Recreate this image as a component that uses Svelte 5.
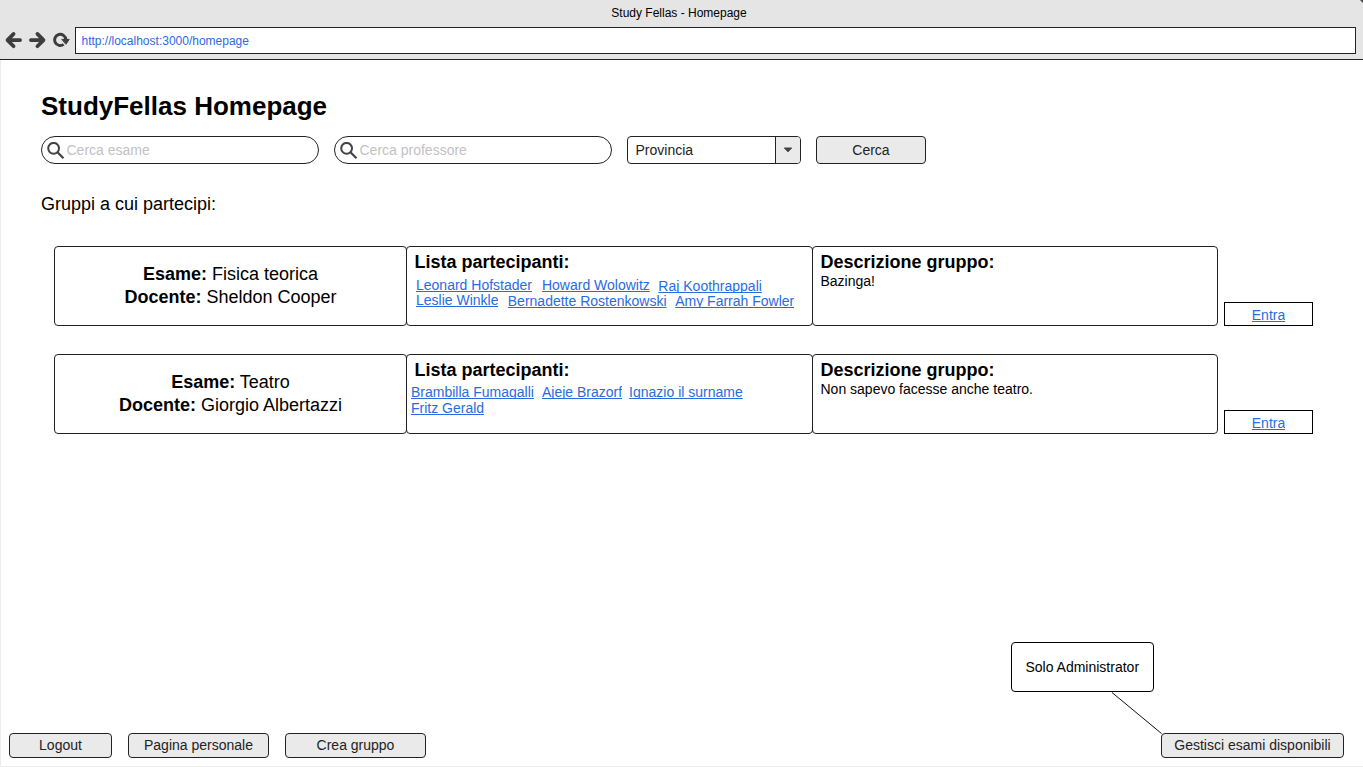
<script>
  const groups = [
    {
      exam: 'Fisica teorica',
      teacher: 'Sheldon Cooper',
      description: 'Bazinga!',
      inset: 9,
      top: 5,
      rows: [
        [
          { name: 'Leonard Hofstader', gap: 0, drop: 0 },
          { name: 'Howard Wolowitz', gap: 10, drop: 0 },
          { name: 'Raj Koothrappali', gap: 8.5, drop: 1 }
        ],
        [
          { name: 'Leslie Winkle', gap: 0, drop: 0 },
          { name: 'Bernadette Rostenkowski', gap: 9.3, drop: 1 },
          { name: 'Amy Farrah Fowler', gap: 8.7, drop: 1 }
        ]
      ],
      pitch: 15
    },
    {
      exam: 'Teatro',
      teacher: 'Giorgio Albertazzi',
      description: 'Non sapevo facesse anche teatro.',
      inset: 4,
      top: 4,
      rows: [
        [
          { name: 'Brambilla Fumagalli', gap: 0, drop: 0 },
          { name: 'Ajeje Brazorf', gap: 8, drop: 0 },
          { name: 'Ignazio il surname', gap: 7, drop: 0 }
        ],
        [{ name: 'Fritz Gerald', gap: 0, drop: 0 }]
      ],
      pitch: 16
    }
  ];
  const fields = ['Cerca esame', 'Cerca professore'];
</script>

<div class="window">
  <header>
    <div class="title">Study Fellas - Homepage</div>
    <div class="bar">
      <svg class="nav" width="72" height="22" viewBox="0 0 72 22" fill="none" stroke="#3d3d3d" stroke-width="3.7" stroke-linecap="round" stroke-linejoin="round">
        <path d="M13.6 4.9 7.5 11.1l6.1 6.2M8 11.1h12.1M37.4 4.9l6.1 6.2-6.1 6.2M43 11.1H30.9" />
        <path d="M63.6 15.4A5.6 5.6 0 1 1 65.8 10.6" stroke-width="3" stroke-linecap="butt" />
        <path d="M62.2 10.4h7l-3.1 4.6z" fill="#3d3d3d" stroke-width="1" />
      </svg>
      <div class="url">http://localhost:3000/homepage</div>
    </div>
    <svg class="corner" width="3" height="3" viewBox="0 0 3 3"><path d="M0 0h3v3z" fill="#444" /></svg>
  </header>

  <main>
    <h1>StudyFellas Homepage</h1>
    <div class="search">
      {#each fields as field}
        <div class="field">
          <svg width="18" height="18" viewBox="0 0 18 18" fill="none" stroke="#444">
            <circle cx="6.6" cy="6.3" r="5.4" stroke-width="2" />
            <path d="M10.5 10.2l6 6" stroke-width="2.2" />
          </svg>
          <span>{field}</span>
        </div>
      {/each}
      <div class="select">
        <span>Provincia</span>
        <div class="arrow">
          <svg width="10" height="6" viewBox="0 0 10 6"><path d="M1.2.9h7.6L5 4.9z" fill="#444" stroke="#444" stroke-width=".8" stroke-linejoin="round" /></svg>
        </div>
      </div>
      <button class="go">Cerca</button>
    </div>

    <p class="intro">Gruppi a cui partecipi:</p>

    <div class="groups">
      {#each groups as g}
        <section>
          <div class="cell exam">
            <div><b>Esame:</b> {g.exam}</div>
            <div><b>Docente:</b> {g.teacher}</div>
          </div>
          <div class="cell members">
            <h2>Lista partecipanti:</h2>
            <div class="names" style="padding-left: {g.inset}px; padding-top: {g.top}px">
              {#each g.rows as row}
                <div class="row" style="height: {g.pitch}px">
                  {#each row as m}
                    <span class="link" style="margin-left: {m.gap}px; margin-top: {m.drop}px">{m.name}</span>
                  {/each}
                </div>
              {/each}
            </div>
          </div>
          <div class="cell about">
            <h2>Descrizione gruppo:</h2>
            <p>{g.description}</p>
          </div>
          <div class="enter"><span class="link">Entra</span></div>
        </section>
      {/each}
    </div>
  </main>

  <footer>
    <button class="logout">Logout</button>
    <button>Pagina personale</button>
    <button>Crea gruppo</button>
    <div class="admin">
      <button>Gestisci esami disponibili</button>
      <svg class="leader" width="52" height="44" viewBox="0 0 52 44"><path d="M1 0.5 50.5 41.5" stroke="#111" /></svg>
      <div class="note">Solo Administrator</div>
    </div>
  </footer>
</div>

<style>
  :global(body) { margin: 0; background: #fff; }
  .window, .window * { box-sizing: border-box; }
  .window {
    width: 1363px;
    height: 767px;
    overflow: hidden;
    display: flex;
    flex-direction: column;
    border-bottom: 1px solid #ececec;
    background: #fff;
    color: #000;
    font: 14px/16px "Liberation Sans", Arial, sans-serif;
    white-space: nowrap;
  }
  header {
    position: relative;
    height: 60px;
    flex: none;
    background: #e5e5e5;
    border-bottom: 1px solid #222;
  }
  .corner { position: absolute; top: 0; right: 0; }
  .title { height: 27px; padding: 6px 5px 0 0; text-align: center; font-size: 12px; line-height: 14px; }
  .bar { display: flex; padding-right: 7px; }
  .nav { flex: none; width: 72px; margin: 2px 3px 0 0; }
  .url {
    flex: 1;
    height: 27px;
    padding: 0 5.5px;
    border: 1px solid #222;
    background: #fff;
    color: #2b6be0;
    font-size: 12px;
    line-height: 26px;
  }
  main { flex: 1; padding: 31px 0 0 40px; border-left: 1px solid #ececec; }
  h1 { margin: 0; font-size: 26px; line-height: 30px; }
  .search { display: flex; margin-top: 15px; }
  .field {
    display: flex;
    width: 278px;
    height: 28px;
    margin-right: 15px;
    padding: 5px 0 0 5px;
    border: 1px solid #222;
    border-radius: 14px;
    color: #c2c2c2;
  }
  .field span { margin-left: 1.5px; }
  .select {
    display: flex;
    width: 174px;
    height: 28px;
    margin-right: 15px;
    border: 1px solid #222;
    border-radius: 4px;
    overflow: hidden;
    color: #222;
  }
  .select span { flex: 1; padding: 5px 0 0 7.5px; }
  .arrow { width: 25px; display: flex; align-items: center; justify-content: center; border-left: 1px solid #222; background: #eaeaea; }
  button {
    height: 25px;
    width: 141px;
    padding: 0 0 1px;
    border: 1px solid #222;
    border-radius: 4px;
    background: #eaeaea;
    color: #222;
    font: inherit;
  }
  .go { width: 110px; height: 28px; padding: 0; }
  .intro { margin: 30px 0 0; font-size: 18px; line-height: 21px; }
  .groups { display: flex; flex-direction: column; gap: 28px; margin: 31px 0 0 13px; }
  section { display: flex; }
  .cell { height: 80px; border: 1px solid #222; border-radius: 4px; }
  .exam { width: 353px; padding-top: 16px; text-align: center; font-size: 18px; line-height: 23px; }
  .members, .about { width: 407px; margin-left: -1px; }
  .about { width: 406px; }
  h2 { margin: 0; padding: 5px 0 0 7.5px; font-size: 18px; line-height: 20px; }
  .about p { margin: 0; padding: 1px 0 0 7.5px; }
  .row { display: flex; align-items: flex-start; }
  .link {
    height: 15px;
    overflow: hidden;
    color: #2b6be0;
    text-decoration: underline;
    text-decoration-skip-ink: none;
  }
  .enter {
    display: flex;
    justify-content: center;
    align-self: flex-end;
    width: 89px;
    height: 24px;
    margin-left: 6px;
    padding-top: 4px;
    border: 1px solid #000;
  }
  footer { display: flex; gap: 16px; padding: 0 19px 8px 8px; border-left: 1px solid #ececec; }
  .logout { width: 103px; }
  .admin { position: relative; margin-left: auto; }
  .admin button { width: 183px; display: block; }
  .leader { position: absolute; left: -50px; top: -41px; }
  .note {
    position: absolute;
    left: -150px;
    top: -91px;
    width: 143px;
    height: 50px;
    padding-right: 0.5px;
    border: 1px solid #000;
    border-radius: 4px;
    background: #fff;
    text-align: center;
    line-height: 48px;
  }
</style>
